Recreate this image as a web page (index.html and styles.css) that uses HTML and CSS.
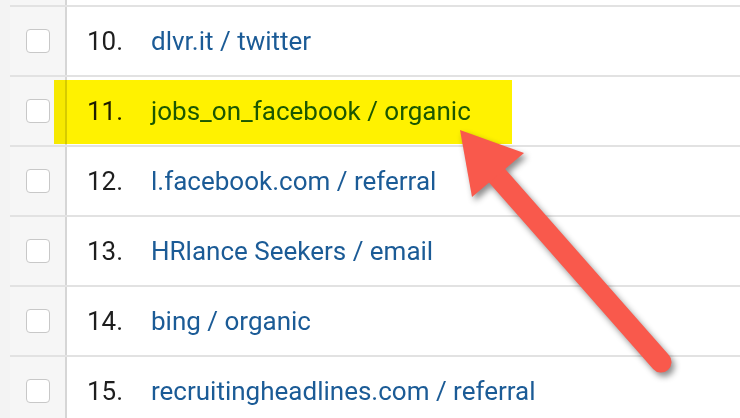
FILE: index.html
```html
<!DOCTYPE html>
<html>
<head>
<meta charset="utf-8">
<link rel="stylesheet" href="styles.css">
</head>
<body>
<div class="page">
  <div class="gutter"></div>
  <div class="table">
    <div class="row stub"><div class="cb-cell"></div><div class="content"></div></div>
    <div class="row"><div class="cb-cell"><span class="cb"></span></div><div class="content"><span class="num">10.</span><a class="src">dlvr.it / twitter</a></div></div>
    <div class="row"><div class="cb-cell"><span class="cb"></span></div><div class="content"><span class="num">11.</span><a class="src">jobs_on_facebook / organic</a></div></div>
    <div class="row"><div class="cb-cell"><span class="cb"></span></div><div class="content"><span class="num">12.</span><a class="src">l.facebook.com / referral</a></div></div>
    <div class="row"><div class="cb-cell"><span class="cb"></span></div><div class="content"><span class="num">13.</span><a class="src">HRlance Seekers / email</a></div></div>
    <div class="row"><div class="cb-cell"><span class="cb"></span></div><div class="content"><span class="num">14.</span><a class="src">bing / organic</a></div></div>
    <div class="row"><div class="cb-cell"><span class="cb"></span></div><div class="content"><span class="num">15.</span><a class="src">recruitingheadlines.com / referral</a></div></div>
  </div>
  <div class="highlight"></div>
  <svg class="arrow" width="740" height="418" viewBox="0 0 740 418">
    <g class="arrow-shape">
      <line x1="492" y1="170" x2="661" y2="362" stroke="#f9594c" stroke-width="21" stroke-linecap="round"/>
      <polygon points="460,130 524,153 472,197" fill="#f9594c"/>
    </g>
  </svg>
</div>
</body>
</html>
```
FILE: styles.css
```css
html, body {
  margin: 0;
  padding: 0;
  background: #ffffff;
}
.page {
  position: relative;
  width: 740px;
  height: 418px;
  overflow: hidden;
  display: flex;
  font-family: Roboto, "Liberation Sans", sans-serif;
}
.gutter {
  width: 10px;
  flex: none;
  background: #f3f3f3;
}
.table {
  flex: 1;
  display: flex;
  flex-direction: column;
}
.row {
  display: flex;
  height: 70px;
  flex: none;
  border-top: 2px solid #e2e2e2;
  box-sizing: border-box;
}
.row.stub {
  height: 5px;
  border-top: none;
}
.cb-cell {
  width: 57px;
  flex: none;
  background: #f6f6f6;
  border-right: 2px solid #d6d6d6;
  display: flex;
  align-items: center;
  padding-left: 16px;
  box-sizing: border-box;
}
.cb {
  width: 24px;
  height: 24px;
  box-sizing: border-box;
  border: 1px solid #c8c8c8;
  border-radius: 4px;
  background: #ffffff;
}
.content {
  flex: 1;
  display: flex;
  align-items: center;
  padding-left: 20px;
  font-size: 26px;
}
.num {
  width: 64px;
  color: #1e1e1e;
}
.src {
  color: #1b5b96;
}
.highlight {
  position: absolute;
  left: 54px;
  top: 80px;
  width: 458px;
  height: 64px;
  background: #fff200;
  mix-blend-mode: multiply;
}
.arrow {
  position: absolute;
  left: 0;
  top: 0;
}
.arrow-shape {
  filter: drop-shadow(3px 4px 3px rgba(0,0,0,0.45));
}
```
